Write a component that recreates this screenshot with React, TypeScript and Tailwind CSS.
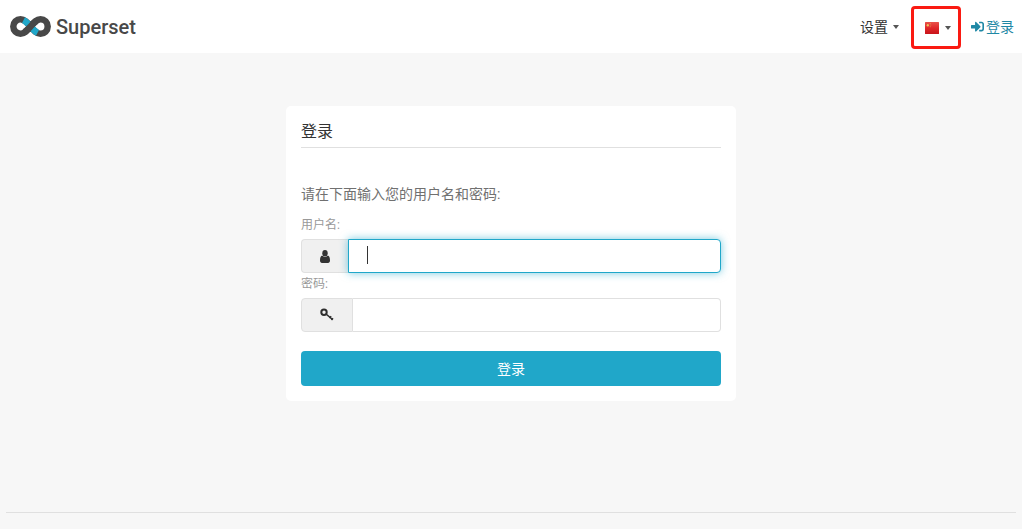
import { FaSignInAlt } from "react-icons/fa";

const fontStack = "font-['Roboto','Noto_Sans_CJK_SC',sans-serif]";

function Logo() {
  return (
    <div className="flex items-center gap-[4px]">
      <svg width="42" height="21" viewBox="0 0 42 21" fill="none">
        <path
          d="M10.500 3.300a7.200 7.200 0 1 0 0 14.400c4 0 6.500-3 10-7.200 3.500-4.200 6-7.200 10-7.200a7.200 7.200 0 1 1 0 14.400c-4 0-6.500-3-10-7.200-3.500-4.200-6-7.200-10-7.200z"
          stroke="#484848"
          strokeWidth="6.500"
        />
        <path d="M13.500 4.200c2.500 1.300 4.500 3.500 7 6.300" stroke="#20a7c9" strokeWidth="6.500" />
        <path d="M20.500 10.500c2.500 2.800 4.500 5 7 6.300" stroke="#20a7c9" strokeWidth="6.500" />
        <path d="M14.500 16c2.300-1.400 4-3.400 6-5.500 2-2.200 3.700-4.100 6-5.500" stroke="#484848" strokeWidth="6.500" />
      </svg>
      <span className="text-[20px] leading-none font-medium text-[#484848] font-['Roboto',sans-serif]">
        Superset
      </span>
    </div>
  );
}

function Caret() {
  return <span className="w-0 h-0 border-x-[3px] border-x-transparent border-t-[4px] border-t-[#555]" />;
}

function Flag() {
  return (
    <svg width="14" height="12" viewBox="0 0 15 12" preserveAspectRatio="none">
      <defs>
        <linearGradient id="flagRed" x1="0" y1="0" x2="0" y2="1">
          <stop offset="0" stopColor="#e8524a" />
          <stop offset="0.5" stopColor="#e0282a" />
          <stop offset="1" stopColor="#c8141a" />
        </linearGradient>
      </defs>
      <rect width="15" height="12" rx="0.500" fill="url(#flagRed)" />
      <circle cx="3" cy="3.200" r="1.200" fill="#eec65a" />
      <circle cx="5.500" cy="1.500" r="0.450" fill="#eec65a" />
      <circle cx="6.300" cy="3" r="0.450" fill="#eec65a" />
      <circle cx="5.500" cy="4.800" r="0.450" fill="#eec65a" />
    </svg>
  );
}

function UserIcon() {
  return (
    <svg width="10" height="13" viewBox="0 0 10 13" fill="#333">
      <ellipse cx="5" cy="3.300" rx="2.700" ry="3.200" />
      <path d="M2.200 5.600C3 6.500 4 7 5 7s2-.5 2.800-1.400C9.200 6 10 7.500 10 10.500c0 1.500-.8 2.500-2 2.500H2c-1.200 0-2-1-2-2.500C0 7.500.8 6 2.200 5.600z" />
    </svg>
  );
}

function KeyIcon() {
  return (
    <svg width="14" height="14" viewBox="0 0 14 14" fill="none" stroke="#2e2e2e">
      <circle cx="4" cy="4.200" r="2.700" strokeWidth="2" />
      <path d="M6 6 12.500 11.500" strokeWidth="1.600" />
      <path d="M9.500 10 11.200 8.300M11.500 12 13 10.300" strokeWidth="1.500" />
    </svg>
  );
}

export default function App() {
  return (
    <div className={`min-h-screen bg-[#f7f7f7] flex flex-col ${fontStack}`}>
      <nav className="h-[53px] bg-white flex items-center justify-between pl-[10px] pr-2">
        <Logo />
        <div className="flex items-center">
          <a className="flex items-center gap-[5px] text-sm text-[#333]">
            设置
            <Caret />
          </a>
          <div className="ml-[12px] mt-[2px] w-[50px] h-[43px] border-[3px] border-[#fa1a12] rounded-[4px] flex items-center justify-center gap-[6px] pl-[4px]">
            <Flag />
            <Caret />
          </div>
          <a className="ml-[10px] flex items-center gap-[2px] text-sm text-[#1f88a5]">
            <FaSignInAlt size={13} />
            登录
          </a>
        </div>
      </nav>

      <main className="flex-1 flex flex-col">
        <section className="w-[450px] mx-auto mt-[53px] bg-white rounded-[5px] px-[15px] pt-[15px] pb-[15px]">
          <h1 className="text-base leading-[22px] text-[#333] pb-[4px] border-b border-[#e0e0e0]">登录</h1>
          <p className="mt-[36px] text-sm leading-5 text-[#707070]">请在下面输入您的用户名和密码:</p>
          <label className="block mt-[13px] text-xs leading-[17px] text-[#999]">用户名:</label>
          <div className="flex h-[34px] mt-[5px]">
            <span className="w-[47px] flex items-center justify-center bg-[#f0f0f0] border border-r-0 border-[#e0e0e0] rounded-l-[4px]">
              <UserIcon />
            </span>
            <div className="relative flex-1 z-10">
              <input
                className="w-full h-full bg-white border border-[#20a7c9] rounded-r-[4px] outline-none caret-transparent shadow-[0_0_8px_rgba(32,167,201,0.6)]"
              />
              <span className="absolute left-[19px] top-[7px] w-px h-[18px] bg-[#333]" />
            </div>
          </div>
          <label className="block mt-[3px] text-xs leading-[17px] text-[#999]">密码:</label>
          <div className="flex h-[34px] mt-[5px]">
            <span className="w-[52px] flex items-center justify-center bg-[#f0f0f0] border border-[#e0e0e0] rounded-l-[4px]">
              <KeyIcon />
            </span>
            <input className="flex-1 min-w-0 bg-white border border-l-0 border-[#e0e0e0] rounded-r-[4px] outline-none" />
          </div>
          <button className="w-full h-[35px] mt-[19px] bg-[#20a7c9] text-white text-sm rounded-[4px]">登录</button>
        </section>

        <div className="mt-auto mx-[6px] mb-4 border-t border-[#e0e0e0]" />
      </main>
    </div>
  );
}
